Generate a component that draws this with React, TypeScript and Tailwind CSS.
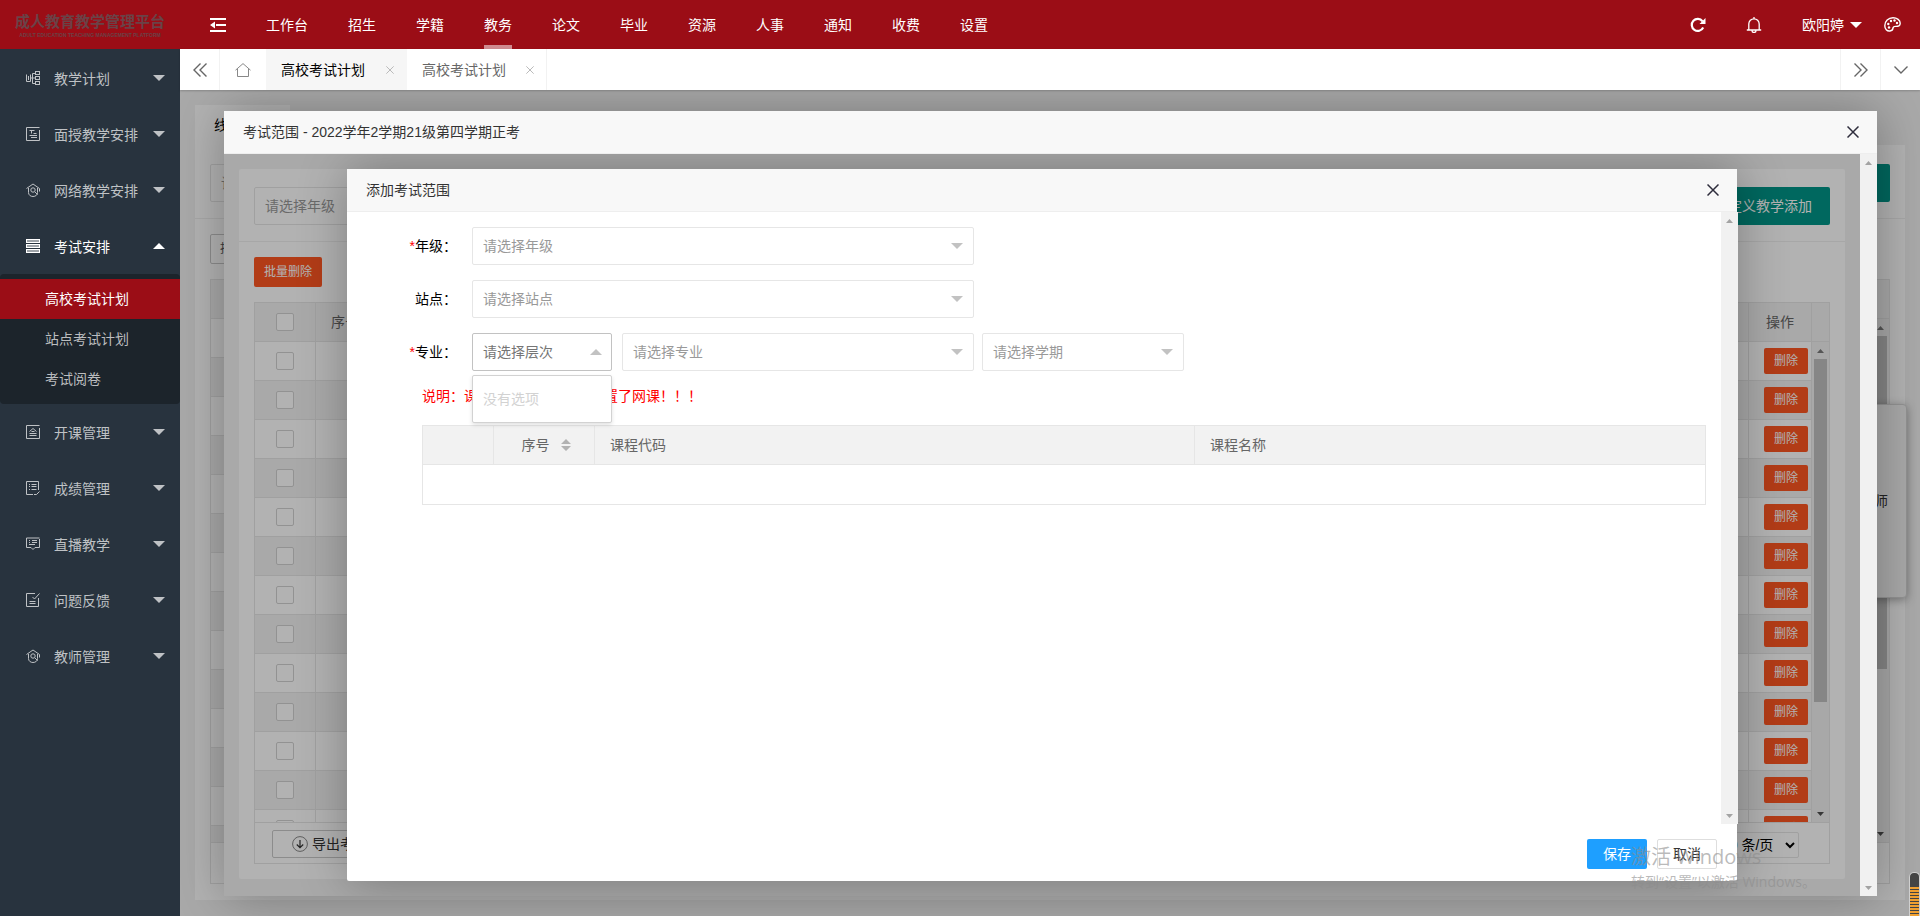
import type { ReactNode } from "react";

const NAV = ["工作台", "招生", "学籍", "教务", "论文", "毕业", "资源", "人事", "通知", "收费", "设置"];

type IconProps = { children: ReactNode; className?: string };

function Glyph({ children, className = "size-[15px]" }: IconProps) {
  return (
    <svg viewBox="0 0 15 15" className={className} fill="none" stroke="currentColor" strokeWidth="1" aria-hidden="true">
      {children}
    </svg>
  );
}

const PlanIcon = () => (
  <Glyph>
    <path d="M.5 3.500v7h4v-7M2.500 5v4M4.500 7h5M9.500 2.500h-3v10h3" />
    <rect x="9.500" y=".5" width="4" height="3" />
    <rect x="9.500" y="5.500" width="4" height="3" />
    <rect x="9.500" y="10.500" width="4" height="3" />
  </Glyph>
);
const BoardIcon = () => (
  <Glyph>
    <path d="M13.500 3v10.500H.5V.5h13M3.500 3.500h5M5.500 3.500v3M7.500 6.500h3M3.500 8.500h7.500M5 10.500h6" />
  </Glyph>
);
const NetIcon = () => (
  <Glyph>
    <path d="M.5 5.500 7 1l6.500 4.500M2.500 5v4.500c0 2.500 2 4 4.500 4s4.500-1.500 4.500-4V5M9 9l2.500 2.500M13.500 5.500v3" />
    <circle cx="7" cy="7" r="2.200" />
  </Glyph>
);
const StackIcon = () => (
  <Glyph>
    <g fill="currentColor" fillOpacity="0.55">
      <rect x=".5" y=".5" width="13" height="3" />
      <rect x=".5" y="5.500" width="13" height="3" />
      <rect x=".5" y="10.500" width="13" height="3" />
    </g>
  </Glyph>
);
const CourseIcon = () => (
  <Glyph>
    <path d="M13.500 3v10.500H.5V.5h13M3.500 6.500 7 3.500l3.500 3M3.500 8.500h7M3.500 10.500h7M5.500 6.500h3" />
  </Glyph>
);
const ScoreIcon = () => (
  <Glyph>
    <path d="M12.500 9V.5H.5v13H7M3 3.500h1M5.500 3.500h5M3 5.500h1M5.500 5.500h5M3 8.500h1M5.500 8.500h5M8 13.500h2.500l3-3" />
  </Glyph>
);
const LiveIcon = () => (
  <Glyph>
    <path d="M13.500 2v8.500H9l-2 2-2-2H.5V1h13M3 3.500h1M6 3.500h5M3 5.500h1M6 5.500h5M3 7.500h6" />
  </Glyph>
);
const FeedbackIcon = () => (
  <Glyph>
    <path d="M9 .5H.5v13h12V5M13.500.5 8.500 6 6.500 4M3.500 8.500h6M3.500 10.500h6" />
  </Glyph>
);

type MenuEntry = { label: string; icon: () => ReactNode; open?: boolean };

const MENU: MenuEntry[] = [
  { label: "教学计划", icon: PlanIcon },
  { label: "面授教学安排", icon: BoardIcon },
  { label: "网络教学安排", icon: NetIcon },
  { label: "考试安排", icon: StackIcon, open: true },
  { label: "开课管理", icon: CourseIcon },
  { label: "成绩管理", icon: ScoreIcon },
  { label: "直播教学", icon: LiveIcon },
  { label: "问题反馈", icon: FeedbackIcon },
  { label: "教师管理", icon: NetIcon },
];

function Caret({ up = false, className = "" }: { up?: boolean; className?: string }) {
  return (
    <svg viewBox="0 0 12 6" className={`h-[6px] w-[12px] shrink-0 ${className}`} fill="currentColor" aria-hidden="true">
      <path d={up ? "M0 6 6 0l6 6z" : "M0 0h12L6 6z"} />
    </svg>
  );
}

function CloseIcon({ className }: { className: string }) {
  return (
    <svg viewBox="0 0 12 12" className={className} fill="none" stroke="currentColor" strokeWidth="1.500" aria-hidden="true">
      <path d="M.5.5l11 11M11.500.5l-11 11" />
    </svg>
  );
}

function Sidebar() {
  return (
    <nav className="w-[180px] shrink-0 bg-[#28333e] pt-px text-sm">
      <ul>
        {MENU.map(({ label, icon: Icon, open }) => (
          <li key={label}>
            <button
              type="button"
              aria-expanded={!!open}
              className={`flex h-14 w-full items-center pr-[15px] pl-[26px] ${open ? "text-white" : "text-[#bfc2c5]"}`}
            >
              <Icon />
              <span className="ml-[13px] pt-px">{label}</span>
              <Caret up={open} className="ml-auto" />
            </button>
            {open && (
              <ul className="rounded bg-[#1c242b] py-[5px]">
                <li>
                  <a href="#college" className="block h-10 bg-[#9b0d16] pl-[45px] leading-10 text-white">高校考试计划</a>
                </li>
                <li>
                  <a href="#site" className="block h-10 pl-[45px] leading-10 text-[#bbbdbf]">站点考试计划</a>
                </li>
                <li>
                  <a href="#marking" className="block h-10 pl-[45px] leading-10 text-[#bbbdbf]">考试阅卷</a>
                </li>
              </ul>
            )}
          </li>
        ))}
      </ul>
    </nav>
  );
}

function Header() {
  return (
    <header className="flex h-[49px] shrink-0 items-center bg-[#9b0d16] text-sm text-white">
      <div className="flex w-[180px] shrink-0 flex-col items-center pt-px text-[#6a4247]">
        <span className="text-[15px] leading-[20px] font-bold">成人教育教学管理平台</span>
        <span className="text-[5px] leading-[7px] font-bold whitespace-nowrap">ADULT EDUCATION TEACHING MANAGEMENT PLATFORM</span>
      </div>
      <button type="button" aria-label="收起菜单" className="flex w-[66px] items-center pl-[30px]">
        <svg viewBox="0 0 16 14" className="h-[14px] w-[16px]" fill="currentColor" aria-hidden="true">
          <path d="M0 0h16v2H0zM6 6h10v2H6zM0 12h16v2H0zM0 7l5-3.500v7z" />
        </svg>
      </button>
      <nav className="flex h-full">
        {NAV.map((label) => (
          <a key={label} href="#nav" className="flex h-full flex-col items-center px-5 whitespace-nowrap">
            <span className="flex flex-1 items-center py-1 leading-5">{label}</span>
            <span className={`-mt-1 h-1 w-full ${label === "教务" ? "bg-[#cf8a8f]" : ""}`} />
          </a>
        ))}
      </nav>
      <div className="ml-auto flex items-center pr-[19px]">
        <button type="button" aria-label="刷新" className="mr-10">
          <svg viewBox="0 0 16 16" className="size-4" fill="none" stroke="currentColor" strokeWidth="2.200" aria-hidden="true">
            <path d="M13.200 10.500A6 6 0 1 1 12.500 4.200" />
            <path d="M15.500 1v6h-6z" fill="currentColor" stroke="none" />
          </svg>
        </button>
        <button type="button" aria-label="消息" className="mr-10">
          <svg viewBox="0 0 16 16" className="size-4" fill="none" stroke="currentColor" strokeWidth="1.300" aria-hidden="true">
            <path d="M.8 13h14.400M2.800 13V7a5.200 5.200 0 0 1 10.400 0v6M8 0v1.800M6 13.500a2 2 0 0 0 4 0" />
          </svg>
        </button>
        <button type="button" className="mr-[22px] flex items-center gap-[6px] whitespace-nowrap">
          欧阳婷
          <Caret />
        </button>
        <button type="button" aria-label="主题">
          <svg viewBox="0 0 17 15" className="h-[15px] w-[17px]" fill="none" stroke="currentColor" strokeWidth="1.400" aria-hidden="true">
            <path d="M6 14C3 14.500.8 12 .8 8.800.8 4.300 4.300.8 9 .8c4 0 7.200 2.400 7.200 5.400 0 2.600-2 3.300-4.400 3.200-2-.1-2.800.6-2.900 2C8.800 13 7.500 13.800 6 14z" />
            <g fill="currentColor" stroke="none">
              <circle cx="4.300" cy="7" r="1.200" />
              <circle cx="7" cy="4" r="1.200" />
              <circle cx="10.500" cy="3.500" r="1.200" />
              <circle cx="13" cy="6" r="1.200" />
              <circle cx="5" cy="10.500" r="1.200" />
            </g>
          </svg>
        </button>
      </div>
    </header>
  );
}

function TabBar() {
  return (
    <div className="relative z-10 flex h-[41px] shrink-0 bg-white text-sm text-[#666] shadow-[0_1px_2px_rgba(0,0,0,0.2)]">
      <button type="button" aria-label="向左" className="flex w-10 items-center justify-center border-r border-[#f2f2f2]">
        <svg viewBox="0 0 14 14" className="size-[14px]" fill="none" stroke="currentColor" strokeWidth="1.400" aria-hidden="true">
          <path d="M7.500.5 1 7l6.500 6.500M13.500.5 7 7l6.500 6.500" />
        </svg>
      </button>
      <button type="button" aria-label="首页" className="flex w-[46px] items-center justify-center text-[#888]">
        <svg viewBox="0 0 16 14" className="h-[14px] w-[16px]" fill="none" stroke="currentColor" aria-hidden="true">
          <path d="M.5 7.200 8 .6l7.500 6.600M2.500 6v7.500h11V6" />
        </svg>
      </button>
      <a href="#tab1" className="flex w-[141px] items-center justify-between bg-[#f6f6f6] pr-[13px] pl-[15px] text-black">
        高校考试计划
        <CloseIcon className="size-2 text-[#bbb]" />
      </a>
      <a href="#tab2" className="flex w-[140px] items-center justify-between border-r border-[#f2f2f2] pr-3 pl-[15px]">
        高校考试计划
        <CloseIcon className="size-2 text-[#bbb]" />
      </a>
      <div className="ml-auto flex">
        <button type="button" aria-label="向右" className="flex w-10 items-center justify-center border-l border-[#f2f2f2]">
          <svg viewBox="0 0 14 14" className="size-[14px]" fill="none" stroke="currentColor" strokeWidth="1.400" aria-hidden="true">
            <path d="M.5.5 7 7 .5 13.500M6.500.5 13 7l-6.500 6.500" />
          </svg>
        </button>
        <button type="button" aria-label="更多" className="flex w-10 items-center justify-center border-l border-[#f2f2f2]">
          <svg viewBox="0 0 14 8" className="h-2 w-[14px]" fill="none" stroke="currentColor" strokeWidth="1.400" aria-hidden="true">
            <path d="M.5.5 7 7 13.500.5" />
          </svg>
        </button>
      </div>
    </div>
  );
}

function ScrollArrow({ up = false, className }: { up?: boolean; className: string }) {
  return (
    <span className={`flex h-[17px] shrink-0 items-center justify-center ${className}`}>
      <svg viewBox="0 0 7 4" className="h-[4px] w-[7px]" fill="currentColor" aria-hidden="true">
        <path d={up ? "M0 4 3.500 0 7 4z" : "M0 0h7L3.500 4z"} />
      </svg>
    </span>
  );
}

function Scrollbar({ thumb = "", className = "" }: { thumb?: string; className?: string }) {
  return (
    <div className={`flex w-[17px] shrink-0 flex-col bg-[#f1f1f1] ${className}`} aria-hidden="true">
      <ScrollArrow up className={thumb ? "text-[#7a7a7a]" : "text-[#a3a3a3]"} />
      <div className="min-h-0 flex-1 px-[2px]">{thumb && <div className={`bg-[#c1c1c1] ${thumb}`} />}</div>
      <ScrollArrow className={thumb ? "text-[#505050]" : "text-[#a3a3a3]"} />
    </div>
  );
}

function Check({ label }: { label: string }) {
  return (
    <input
      type="checkbox"
      aria-label={label}
      className="mx-auto block size-[18px] appearance-none rounded-[2px] border border-[#d2d2d2] bg-white"
    />
  );
}

function FieldSelect({ id, label, text, className }: { id: string; label?: string; text: string; className: string }) {
  return (
    <div className={`relative ${className}`}>
      <select
        id={id}
        aria-label={label}
        className="block h-[38px] w-full appearance-none rounded-[2px] border border-[#e6e6e6] bg-white pr-8 pl-[10px] text-sm text-[#999]"
      >
        <option>{text}</option>
      </select>
      <Caret className="pointer-events-none absolute top-4 right-[11px] text-[#c2c2c2]" />
    </div>
  );
}

function ExamPlanPage() {
  return (
    <div className="flex h-full flex-col bg-[#f2f2f2] px-[15px] pt-[15px] pb-4 text-sm">
      <div className="h-10 w-[95px] shrink-0 bg-white pl-[19px] leading-10 text-black">线上考试</div>
      <section className="flex min-h-0 flex-1 flex-col bg-white">
        <div className="flex items-start justify-between border-b border-[#f0f0f0] px-[15px] pt-[19px] pb-4">
          <FieldSelect id="plan-year" label="学年" text="请选择学年" className="w-[200px]" />
          <button type="button" className="h-[38px] rounded-[2px] bg-[#009688] px-[18px] text-white">添加</button>
        </div>
        <div className="flex min-h-0 flex-1 flex-col p-[15px] pb-4">
          <button type="button" className="h-[30px] shrink-0 self-start rounded-[2px] border border-[#c9c9c9] px-[9px] text-xs text-[#555]">
            批量操作
          </button>
          <div className="mt-[15px] flex min-h-0 flex-1 flex-col border border-[#e6e6e6]">
            <div className="h-[39px] shrink-0 border-b border-[#e6e6e6] bg-[#f2f2f2]" />
            <div className="flex min-h-0 flex-1">
              <div className="flex-1 overflow-hidden">
                {Array.from({ length: 14 }, (_, i) => (
                  <div key={i} className="h-[39px] border-b border-[#e6e6e6] odd:bg-white even:bg-[#f2f2f2]" />
                ))}
              </div>
              <Scrollbar thumb="h-[68%]" />
            </div>
            <div className="h-[41px] shrink-0 border-t border-[#e6e6e6] bg-white" />
          </div>
        </div>
      </section>
      <div className="absolute top-[314px] right-[13px] flex h-[194px] w-[190px] items-center justify-end rounded border border-[#d2d2d2] bg-[#f2f2f2] pr-[18px] text-sm text-[#333] shadow-[0_2px_10px_rgba(0,0,0,0.35)]">
        授课教师
      </div>
    </div>
  );
}

function DialogFrame({ title, className, children }: { title: string; className: string; children: ReactNode }) {
  return (
    <section
      role="dialog"
      aria-label={title}
      className={`absolute flex flex-col rounded-[2px] bg-white shadow-[1px_1px_50px_rgba(0,0,0,0.3)] ${className}`}
    >
      <header className="flex h-[43px] shrink-0 items-center justify-between border-b border-[#eee] bg-[#f8f8f8] pr-[18px] pl-[19px] text-sm text-[#333]">
        <h2>{title}</h2>
        <button type="button" aria-label="关闭">
          <CloseIcon className="size-3 text-[#2e2d3c]" />
        </button>
      </header>
      {children}
    </section>
  );
}

const ROWS = Array.from({ length: 13 }, (_, i) => i + 1);

function ScopeCols() {
  return (
    <colgroup>
      <col className="w-[61px]" />
      <col className="w-[80px]" />
      <col />
      <col className="w-[63px]" />
    </colgroup>
  );
}

function ScopePage() {
  return (
    <div className="flex h-full flex-col bg-[#f2f2f2] px-[15px] pt-[15px] pb-[17px] text-sm">
      <section className="flex min-h-0 flex-1 flex-col rounded-[2px] bg-white">
        <div className="flex items-start justify-between border-b border-[#f0f0f0] px-[15px] pt-[18px] pb-4">
          <FieldSelect id="scope-grade" label="年级" text="请选择年级" className="w-[200px]" />
          <button type="button" className="h-[38px] rounded-[2px] bg-[#009688] px-[18px] text-white">自定义教学添加</button>
        </div>
        <div className="flex min-h-0 flex-1 flex-col p-[15px]">
          <button type="button" className="h-[30px] shrink-0 self-start rounded-[2px] bg-[#ff5722] px-[10px] text-xs text-white">
            批量删除
          </button>
          <div className="mt-[15px] flex min-h-0 flex-1 flex-col border border-[#e6e6e6] text-[#666]">
            <div className="flex shrink-0 border-b border-[#e6e6e6] bg-[#f2f2f2]">
              <table className="flex-1 table-fixed border-separate border-spacing-0">
                <ScopeCols />
                <thead>
                  <tr className="h-[38px]">
                    <th className="border-r border-[#e6e6e6] p-0"><Check label="全选" /></th>
                    <th className="border-r border-[#e6e6e6] p-0 pl-[15px] text-left font-normal">序号</th>
                    <th className="border-r border-[#e6e6e6] p-0" />
                    <th className="border-r border-[#e6e6e6] p-0 text-center font-normal">操作</th>
                  </tr>
                </thead>
              </table>
              <div className="w-[17px]" />
            </div>
            <div className="flex min-h-0 flex-1">
              <div className="flex flex-1 overflow-hidden">
                <table className="h-max flex-1 table-fixed border-separate border-spacing-0">
                  <ScopeCols />
                  <tbody>
                    {ROWS.map((n) => (
                      <tr key={n} className="h-[39px] odd:bg-white even:bg-[#f2f2f2]">
                        <td className="border-r border-b border-[#e6e6e6] p-0"><Check label={`选择第${n}行`} /></td>
                        <td className="border-r border-b border-[#e6e6e6] p-0 text-center">{n}</td>
                        <td className="border-r border-b border-[#e6e6e6] p-0" />
                        <td className="border-r border-b border-[#e6e6e6] p-0 pl-[15px]">
                          <button type="button" className="block h-[26px] w-11 rounded-[2px] bg-[#ff5722] text-xs text-white">
                            删除
                          </button>
                        </td>
                      </tr>
                    ))}
                  </tbody>
                </table>
              </div>
              <Scrollbar thumb="h-[77%]" />
            </div>
            <div className="flex h-[41px] shrink-0 items-end justify-between border-t border-[#e6e6e6] pr-[30px] pb-[5px] pl-[17px]">
              <button type="button" className="flex h-7 items-center gap-1 rounded-[2px] border border-[#c9c9c9] pr-5 pl-[19px] text-[#333]">
                <svg viewBox="0 0 16 16" className="size-4" fill="none" stroke="currentColor" strokeWidth="1" aria-hidden="true">
                  <circle cx="8" cy="8" r="7.400" stroke="#888" />
                  <path d="M8 4v7.500M4.800 8.500 8 11.600l3.200-3.100" strokeWidth="1.200" />
                </svg>
                导出考试范围
              </button>
              <select aria-label="每页条数" className="h-[26px] w-[88px] rounded-[2px] border border-[#e6e6e6] bg-white pl-[6px] text-sm text-black">
                <option>20 条/页</option>
              </select>
            </div>
          </div>
        </div>
      </section>
    </div>
  );
}

function FormRow({ id, label, required = false, children }: { id: string; label: string; required?: boolean; children: ReactNode }) {
  return (
    <div className="flex h-[38px] items-center">
      <label htmlFor={id} className="w-[125px] shrink-0 pr-[15px] text-right text-black">
        {required && <span className="text-[#f00]">*</span>}
        {label}：
      </label>
      {children}
    </div>
  );
}

function AddScopeForm() {
  return (
    <form className="flex min-h-0 flex-1 flex-col text-sm">
      <div className="-mr-px flex min-h-0 flex-1">
        <div className="flex min-w-0 flex-1 flex-col gap-[15px] pt-[15px]">
          <FormRow id="grade" label="年级" required>
            <FieldSelect id="grade" text="请选择年级" className="w-[502px]" />
          </FormRow>
          <FormRow id="site" label="站点">
            <FieldSelect id="site" text="请选择站点" className="w-[502px]" />
          </FormRow>
          <FormRow id="level" label="专业" required>
            <div className="relative w-[140px]">
              <button
                id="level"
                type="button"
                role="combobox"
                aria-expanded="true"
                aria-controls="level-list"
                className="flex h-[38px] w-full items-center justify-between rounded-[2px] border border-[#c2c2c2] bg-white pr-[9px] pl-[10px] text-[#757575]"
              >
                请选择层次
                <Caret up className="text-[#c2c2c2]" />
              </button>
              <div
                id="level-list"
                role="listbox"
                className="absolute top-[42px] left-0 z-10 h-12 w-full rounded-[2px] border border-[#d2d2d2] bg-white pl-[10px] leading-[46px] text-[#d2d2d2] shadow-[0_2px_4px_rgba(0,0,0,0.12)]"
              >
                没有选项
              </div>
            </div>
            <FieldSelect id="major" label="专业" text="请选择专业" className="ml-[10px] w-[352px]" />
            <FieldSelect id="term" label="学期" text="请选择学期" className="ml-2 w-[202px]" />
          </FormRow>
          <div className="pr-[15px] pl-[75px]">
            <p className="h-5 leading-5 text-[#f00]">说明：课程名称标红代表已设置了网课！！！</p>
            <table className="mt-[19px] w-full table-fixed border-collapse border border-[#e6e6e6] text-[#666]">
              <colgroup>
                <col className="w-[71px]" />
                <col className="w-[101px]" />
                <col className="w-[600px]" />
                <col />
              </colgroup>
              <thead className="bg-[#f2f2f2] text-left">
                <tr className="h-[39px]">
                  <th className="border border-[#e6e6e6] p-0" />
                  <th className="border border-[#e6e6e6] p-0 font-normal">
                    <span className="flex items-center justify-center gap-[11px] pl-1">
                      序号
                      <svg viewBox="0 0 10 12" className="h-3 w-[10px]" fill="#b2b2b2" aria-hidden="true">
                        <path d="M0 5 5 0l5 5zM0 7h10l-5 5z" />
                      </svg>
                    </span>
                  </th>
                  <th className="border border-[#e6e6e6] p-0 pl-[15px] font-normal">课程代码</th>
                  <th className="border border-[#e6e6e6] p-0 pl-[15px] font-normal">课程名称</th>
                </tr>
              </thead>
              <tbody>
                <tr className="h-10">
                  <td colSpan={4} />
                </tr>
              </tbody>
            </table>
          </div>
        </div>
        <Scrollbar />
      </div>
      <div className="flex shrink-0 justify-end gap-[10px] pt-[15px] pr-5 pb-3">
        <button type="button" className="h-[30px] w-[60px] rounded-[2px] bg-[#1e9fff] text-white">保存</button>
        <button type="button" className="h-[30px] w-[60px] rounded-[2px] border border-[#dedede] bg-white text-[#333]">取消</button>
      </div>
    </form>
  );
}

export default function App() {
  return (
    <div className="relative flex h-screen flex-col overflow-hidden font-['Liberation_Sans','Noto_Sans_CJK_SC',sans-serif]">
      <Header />
      <div className="flex min-h-0 flex-1">
        <Sidebar />
        <div className="flex min-w-0 flex-1 flex-col">
          <TabBar />
          <main className="relative min-h-0 flex-1 overflow-hidden">
            <ExamPlanPage />
            <div className="absolute inset-0 bg-black/30" />
            <DialogFrame title="考试范围 - 2022学年2学期21级第四学期正考" className="top-[21px] right-[43px] bottom-5 left-11">
              <div className="flex min-h-0 flex-1">
                <div className="relative min-w-0 flex-1 overflow-hidden">
                  <ScopePage />
                  <div className="absolute inset-0 bg-black/30" />
                  <DialogFrame title="添加考试范围" className="inset-x-[123px] inset-y-[15px]">
                    <AddScopeForm />
                  </DialogFrame>
                </div>
                <Scrollbar />
              </div>
            </DialogFrame>
          </main>
        </div>
      </div>
      <div className="pointer-events-none absolute right-[85px] bottom-6 z-20 w-[204px] font-['Open_Sans','Noto_Sans_CJK_SC',sans-serif] text-[#8c8c8c]/60">
        <p className="text-[20px] leading-[30px]">激活 Windows</p>
        <p className="text-[14px] leading-5 whitespace-nowrap">转到“设置”以激活 Windows。</p>
      </div>
      <div className="absolute right-0 bottom-0 z-20 h-11 w-[11px] overflow-hidden rounded-t-[5px] border border-b-0 border-[#d0d0d0] bg-[#444] pt-[14px]">
        <div className="h-full bg-[repeating-linear-gradient(#f0a030_0_2px,#444_2px_3px)]" />
      </div>
    </div>
  );
}
